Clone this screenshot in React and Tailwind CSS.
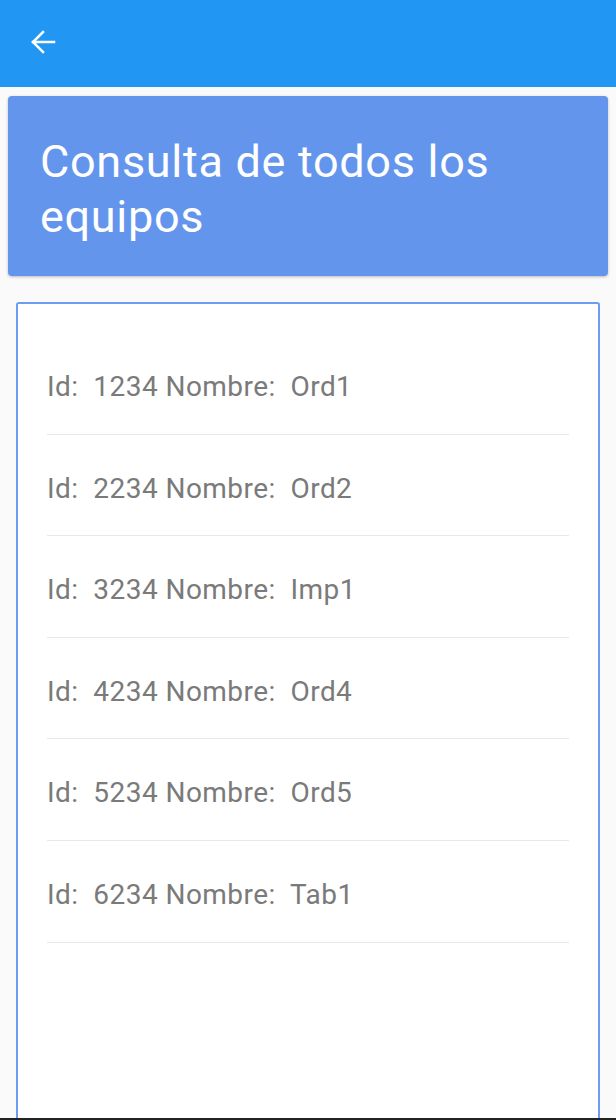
import React from 'react';

const equipos = [
  { id: 1234, nombre: 'Ord1' },
  { id: 2234, nombre: 'Ord2' },
  { id: 3234, nombre: 'Imp1' },
  { id: 4234, nombre: 'Ord4' },
  { id: 5234, nombre: 'Ord5' },
  { id: 6234, nombre: 'Tab1' },
];

const App = () => {
  return (
    <div className="w-[616px] h-[1120px] overflow-hidden bg-[#fafafa] flex flex-col font-['Roboto',sans-serif]">
      {/* Toolbar */}
      <div className="h-[87px] shrink-0 bg-[#2196f3] flex items-start pl-[31px] pt-[30px]">
        <svg width="25" height="24" viewBox="0 0 25 24" fill="none" stroke="white" strokeWidth="2.5" strokeLinecap="square">
          <path d="M2 12H23" />
          <path d="M12 2L2 12L12 22" />
        </svg>
      </div>

      {/* Title card */}
      <div className="mx-2 mt-[9px] h-[180px] shrink-0 rounded bg-[#6495ed] shadow-[0_1px_3px_rgba(0,0,0,0.25)] px-8 pt-[38px]">
        <h1 className="text-white text-[45px] leading-[55px] tracking-[0.7px] font-normal">
          Consulta de todos los equipos
        </h1>
      </div>

      {/* List */}
      <div className="mx-4 mt-[26px] flex-1 bg-white border-2 border-b-0 border-[#6d9cf0] rounded-t-[3px] px-[29px] pt-[29px]">
        {equipos.map((e) => (
          <div
            key={e.id}
            className="h-[101.6px] border-b border-[#e8e8e8] pt-[39px] text-[28px] leading-[30px] tracking-[0.45px] text-[#7a7a7a] whitespace-pre"
          >
            {`Id:  ${e.id} Nombre:  ${e.nombre}`}
          </div>
        ))}
      </div>
      <div className="h-[2px] shrink-0 bg-[#222]" />
    </div>
  );
};

export default App;
